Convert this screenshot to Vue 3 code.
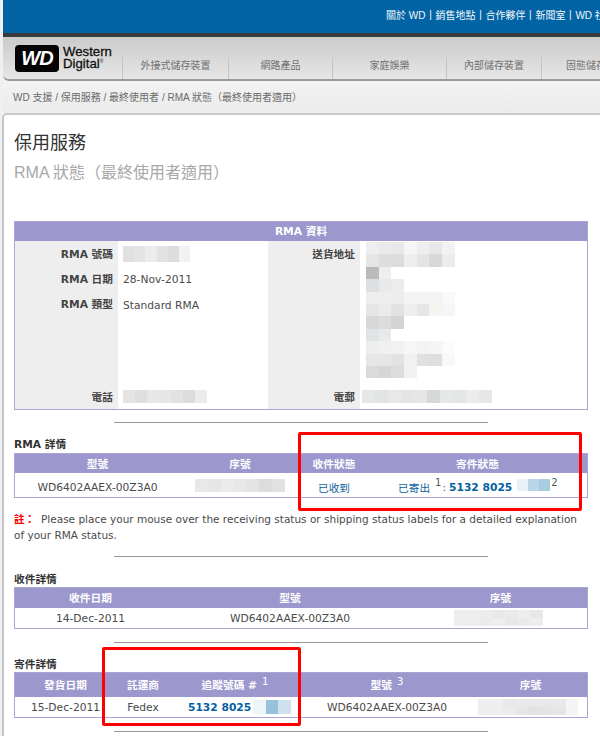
<script setup>
import { h } from 'vue'

const Mosaic = (props) =>
  h('div', { class: 'mosaic' },
    props.rows.map((row) =>
      h('div', { class: 'mrow', style: { height: props.ch + 'px' } },
        row.map((c) => h('i', { style: { width: props.cw + 'px', background: c } }))
      )
    )
  )
Mosaic.props = ['rows', 'cw', 'ch']

const navItems = ['外接式儲存裝置', '網路產品', '家庭娛樂', '內部儲存裝置', '固態儲存裝置']

const address = [
  ['#eeeeee', '#eaeaea', '#e8e8e8', '#f5f5f5', '#eeeeee', '#e8e8e8', '#f2f2f2'],
  ['#e4e6e6', '#dddddd', '#dcdcdc', '#eeeeee', '#e4e4e4', '#d8d8d8', '#ececec'],
  ['#b8babc', '#eeeeee'],
  ['#dde0e2', '#e8eaea', '#ececec'],
  ['#eeeeee', '#eeeeee', '#ececec', '#f3f3f3', '#f3f3f3', '#f3f3f3', '#f9f9f9'],
  ['#e6e6e6', '#ebebeb', '#e2e2e2', '#eeeeee', '#e6e6e6', '#f5f5f0', '#f4f6f8'],
  ['#d8d8d8', '#dcdcdc', '#d4d4d4'],
  ['#e0e4e6', '#e8eaea'],
  ['#eeeeee', '#f0f0f0', '#f1f1f1', '#f6f6f6', '#f3f3f3', '#f5f5f5', '#fbfbfb'],
  ['#e6e6e6', '#e6e6e6', '#e2e2e2', '#f0f2f2', '#e0e0e0', '#dedede', '#f6f8fa'],
  ['#dadada', '#d6d6d6', '#dcdcdc', '#f0f2f2'],
]
const rmaNo = [['#e0e0e0', '#e4e4e4', '#ececec', '#e2e2e2', '#dcdcdc', '#f2f2f2']]
const phone = [['#e4e4e4', '#dedede', '#e8e8e8', '#e6e6e6', '#e2e2e2', '#dcdcdc', '#ececec']]
const email = [['#e6e8e8', '#e2e4e4', '#e8e8e8', '#e4e4e4', '#e6e6e6', '#d6d8da', '#e6e8e8', '#e4e6e6', '#ececec', '#e6e8e8']]
const serial2 = [['#e8e8e8', '#e6e6e6', '#ebebeb', '#e8e8e8', '#e4e4e4', '#dcdcdc', '#e2e2e2']]
const serial3 = [
  ['#eeeeee', '#eeeeee', '#ececec', '#e8e8e8', '#eaeaea', '#eeeeee', '#e8e8e8'],
  ['#efefef', '#eeeeee', '#ebebeb', '#eeeeee', '#e8e8e8', '#eaeaea', '#eeeeee'],
]
const serial4 = [
  ['#efefef', '#efefef', '#e8e8e8', '#eaeaea', '#e8e8e8', '#e8e8e8', '#e8e8e8', '#f4f4f4'],
  ['#eeeeee', '#eeeeee', '#ececec', '#e6e6e6', '#e2e2e2', '#e4e4e4', '#e6e6e6', '#f4f4f4'],
]
const track2 = [['#e8f2f8', '#b8d6e8', '#a8cce2']]
const track4 = [['#eef5f9', '#98c2dc', '#cde2ee']]
</script>

<template>
  <div class="page">
    <header class="topbar">
      <span>關於 WD</span><b>|</b><span>銷售地點</span><b>|</b><span>合作夥伴</span><b>|</b><span>新聞室</span><b>|</b><span>WD 社群</span>
    </header>
    <nav class="nav">
      <div class="logo">
        <div class="badge">WD</div>
        <div class="brand">Western<br />Digital<sup>®</sup></div>
      </div>
      <div v-for="(item, i) in navItems" :key="item" class="navitem" :class="'n' + i">{{ item }}</div>
    </nav>
    <div class="crumbs">WD 支援 / 保用服務 / 最終使用者 / RMA 狀態（最終使用者適用）</div>

    <main class="card">
      <h1>保用服務</h1>
      <h2>RMA 狀態（最終使用者適用）</h2>

      <section class="info">
        <div class="thead">RMA 資料</div>
        <div class="infobody">
          <div class="lab lab1">
            <div class="row">RMA 號碼</div>
            <div class="row">RMA 日期</div>
            <div class="row">RMA 類型</div>
            <div class="row bottom">電話</div>
          </div>
          <div class="val val1">
            <div class="row"><Mosaic :rows="rmaNo" :cw="11.2" :ch="16" /></div>
            <div class="row">28-Nov-2011</div>
            <div class="row">Standard RMA</div>
            <div class="row bottom"><Mosaic :rows="phone" :cw="12" :ch="13" /></div>
          </div>
          <div class="lab lab2">
            <div class="row">送貨地址</div>
            <div class="row bottom">電郵</div>
          </div>
          <div class="val val2">
            <div class="addr"><Mosaic :rows="address" :cw="12.67" :ch="12.4" /></div>
            <div class="row bottom"><Mosaic :rows="email" :cw="13" :ch="13" /></div>
          </div>
        </div>
      </section>

      <hr class="rule r1" />

      <h3 class="h-rma">RMA 詳情</h3>
      <section class="tbl t2">
        <div class="th">型號</div>
        <div class="th">序號</div>
        <div class="th">收件狀態</div>
        <div class="th">寄件狀態</div>
        <div class="td low">WD6402AAEX-00Z3A0</div>
        <div class="td"><Mosaic :rows="serial2" :cw="12.85" :ch="13" /></div>
        <div class="td low link">已收到</div>
        <div class="td ship">
          <span class="link low">已寄出</span><sup>1</sup><span class="colon low">:</span>
          <strong class="low">5132 8025</strong>
          <Mosaic :rows="track2" :cw="11" :ch="12" /><sup class="s2">2</sup>
        </div>
      </section>

      <p class="note"><em>註：</em>Please place your mouse over the receiving status or shipping status labels for a detailed explanation of your RMA status.</p>

      <hr class="rule r2" />

      <h3 class="h-recv">收件詳情</h3>
      <section class="tbl t3">
        <div class="th">收件日期</div>
        <div class="th">型號</div>
        <div class="th">序號</div>
        <div class="td">14-Dec-2011</div>
        <div class="td">WD6402AAEX-00Z3A0</div>
        <div class="td"><Mosaic :rows="serial3" :cw="12.7" :ch="8" /></div>
      </section>

      <hr class="rule r3" />

      <h3 class="h-ship">寄件詳情</h3>
      <section class="tbl t4">
        <div class="th">發貨日期</div>
        <div class="th">託運商</div>
        <div class="th">追蹤號碼 #<sup>1</sup></div>
        <div class="th">型號<sup>3</sup></div>
        <div class="th">序號</div>
        <div class="td">15-Dec-2011</div>
        <div class="td">Fedex</div>
        <div class="td track"><strong>5132 8025</strong><Mosaic :rows="track4" :cw="12.5" :ch="14" /></div>
        <div class="td">WD6402AAEX-00Z3A0</div>
        <div class="td"><Mosaic :rows="serial4" :cw="12.5" :ch="8" /></div>
      </section>

      <hr class="rule r4" />
    </main>

    <div class="mark m1"></div>
    <div class="mark m2"></div>
  </div>
</template>

<style scoped>
.page {
  position: relative;
  width: 600px;
  height: 736px;
  overflow: hidden;
  box-sizing: border-box;
  padding-left: 3px;
  background: #f0f0f0;
  font-family: "DejaVu Sans", "Noto Sans CJK TC", sans-serif;
  font-size: 10.7px;
  color: #4a4a4a;
}
.topbar {
  display: flex;
  align-items: center;
  gap: 3.7px;
  height: 33px;
  box-sizing: border-box;
  padding: 0 0 4px 383px;
  background: #0364a5;
  color: #f2f7fb;
  font: 10px "Liberation Sans", "Noto Sans CJK TC", sans-serif;
  white-space: nowrap;
}
.topbar b { font-weight: 400; }
.nav {
  display: flex;
  position: relative;
  height: 48px;
  box-sizing: border-box;
  overflow: hidden;
  border-top: 4px solid #3a3a3a;
  border-bottom: 2px solid #9a9a9a;
  border-bottom-left-radius: 6px;
  background: linear-gradient(#cbcbcb, #e6e6e6);
  font: 10px "Liberation Sans", "Noto Sans CJK TC", sans-serif;
  color: #707070;
  white-space: nowrap;
}
.logo {
  display: flex;
  flex: none;
  align-items: center;
  gap: 4px;
  width: 119px;
  box-sizing: border-box;
  padding-left: 12px;
}
.badge {
  width: 44px;
  height: 27px;
  border-radius: 4px;
  background: #050505;
  color: #fff;
  font: italic 700 20px/26px "Liberation Sans", sans-serif;
  letter-spacing: -1px;
  text-align: center;
}
.brand {
  font: 13.2px/12.5px "Liberation Sans", sans-serif;
  color: #111;
  -webkit-text-stroke: 0.3px #111;
}
.brand sup { font-size: 5px; line-height: 0; vertical-align: 5px; -webkit-text-stroke: 0; }
.navitem {
  display: flex;
  flex: none;
  align-items: flex-end;
  justify-content: center;
  height: 42px;
  box-sizing: border-box;
  padding-bottom: 7px;
  border-left: 1px solid #cfcfcf;
  border-image: linear-gradient(transparent 35%, #c4c4c4 60%) 1;
}
.n0 { width: 106px; }
.n1 { width: 104px; }
.n2 { width: 114px; }
.n3 { width: 95px; }
.n4 { width: 100px; justify-content: flex-start; padding-left: 24px; }
.crumbs {
  height: 32px;
  box-sizing: border-box;
  padding: 10px 0 0 10px;
  background: linear-gradient(#f3f3f3, #ebebeb);
  font: 10px/14px "Liberation Sans", "Noto Sans CJK TC", sans-serif;
  color: #6a6a6a;
  white-space: nowrap;
}
.card {
  width: 620px;
  height: 640px;
  box-sizing: border-box;
  margin-left: -1px;
  padding-left: 10px;
  background: #fff;
  border-top: 2px solid #c9c9c9;
  border-left: 2px solid #c4c4c4;
  border-top-left-radius: 5px;
}
h1 {
  margin: 16px 0 0;
  font: 400 18px/24px "Liberation Sans", "Noto Sans CJK TC", sans-serif;
  color: #333;
}
h2 {
  margin: 8px 0 0;
  font: 400 16px/20px "Liberation Sans", "Noto Sans CJK TC", sans-serif;
  color: #a8a8a8;
}
.info {
  width: 574px;
  height: 189px;
  box-sizing: border-box;
  margin-top: 38px;
  border: 1px solid #a9a5d5;
}
.thead {
  height: 19px;
  background: #9c97cd;
  color: #fff;
  font-weight: 700;
  line-height: 19px;
  text-align: center;
}
.infobody {
  display: grid;
  grid-template-columns: 103px 150px 92px 1fr;
  height: 168px;
}
.lab, .val {
  display: flex;
  flex-direction: column;
}
.lab {
  background: #eeeeee;
  font-weight: 700;
  color: #444;
  text-align: right;
}
.lab .row { justify-content: flex-end; padding-right: 5px; }
.val1 .row { padding-left: 5px; }
.val1 .row:nth-child(2), .val1 .row:nth-child(3) { padding-top: 1px; }
.val2 { padding-left: 2px; }
.row {
  display: flex;
  align-items: center;
  height: 25px;
}
.bottom { margin-top: auto; }
.addr { height: 136px; margin: 1px 0 0 4px; }
.rule {
  width: 374px;
  height: 1px;
  margin: 0 0 0 100px;
  border: 0;
  background: #999;
}
.r1 { margin-top: 12px; }
.r2 { margin-top: 13px; }
.r3 { margin-top: 13px; }
.r4 { margin-top: 13px; }
h3 {
  margin: 15px 0 0;
  height: 15px;
  font-size: 10.7px;
  font-weight: 700;
  line-height: 15px;
  color: #333;
}
.h-rma { line-height: 13px; }
.h-ship { margin-top: 14px; }
.tbl {
  display: grid;
  width: 574px;
  box-sizing: border-box;
  border: 1px solid #a9a5d5;
}
.t2 { grid-template-columns: 165px 120px 68px 1fr; grid-template-rows: 19px 24px; }
.t3 { grid-template-columns: 151px 248px 1fr; grid-template-rows: 20px 20px; }
.t4 { grid-template-columns: 101px 54px 130px 174px 1fr; grid-template-rows: 24px 20px; }
.th, .td {
  display: flex;
  align-items: center;
  justify-content: center;
}
.th {
  background: #9c97cd;
  color: #fff;
  font-weight: 700;
  padding-bottom: 1px;
}
.th sup { font-size: 10px; font-weight: 400; line-height: 0; margin: -6px 0 0 5px; }
.low { padding-top: 4px; }
.link { color: #0a5f9e; }
strong { color: #055f9f; font-weight: 700; }
.ship { justify-content: flex-start; padding-left: 30px; }
.ship sup { font-size: 10px; line-height: 0; margin: -4px 0 0 5px; color: #555; }
.ship .s2 { margin-left: 1px; }
.colon { margin: 0 3px 0 1px; color: #555; }
.ship strong { margin-right: 5px; }
.track { justify-content: flex-start; padding-left: 18px; }
.track strong { margin-right: 2px; }
.t3 .td:last-child { padding-right: 4px; }
.t4 .td:last-child, .t4 .th:last-child { padding-right: 5px; }
.note {
  width: 574px;
  margin: 13px 0 0;
  font-size: 10.5px;
  line-height: 16px;
  color: #4a4a4a;
}
.note em {
  font-style: normal;
  font-weight: 700;
  color: #f00;
  margin-right: 6px;
}
.mark {
  position: absolute;
  box-sizing: border-box;
  border: 3px solid #f00;
  border-radius: 2px;
}
.m1 { left: 298px; top: 432px; width: 284px; height: 79px; }
.m2 { left: 102px; top: 647px; width: 199px; height: 79px; }
</style>

<style>
.mosaic { display: flex; flex-direction: column; flex: none; }
.mrow { display: flex; }
.mrow i { display: block; flex: none; height: 100%; }
</style>
